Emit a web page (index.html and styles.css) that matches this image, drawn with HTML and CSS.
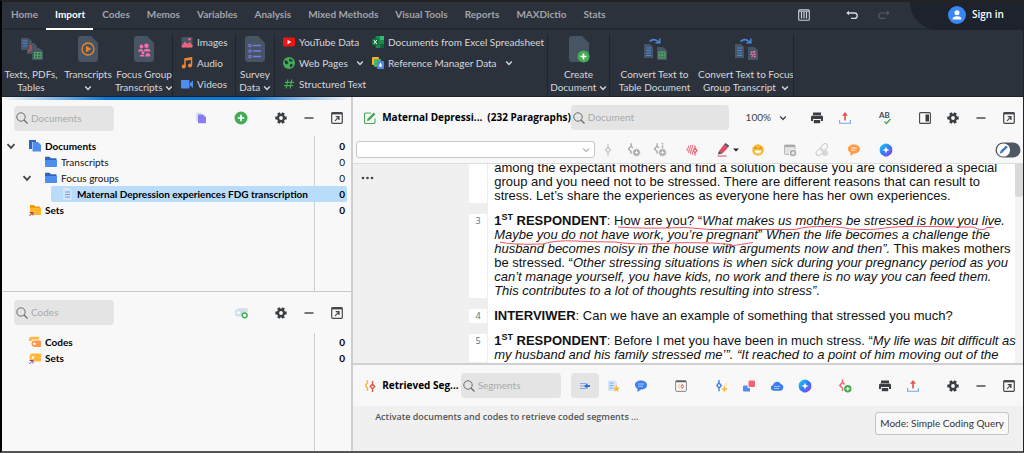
FILE: index.html
```html
<!DOCTYPE html>
<html lang="en">
<head>
<meta charset="utf-8">
<title>Maternal Depression experiences</title>
<link rel="stylesheet" href="styles.css">
</head>
<body>
<svg class="defs" aria-hidden="true">
  <defs>
    <linearGradient id="ai-fill" x1="0" y1="0" x2="1" y2="1"><stop offset="0" stop-color="#19d3f5"/><stop offset=".5" stop-color="#2f7df6"/><stop offset="1" stop-color="#a03df0"/></linearGradient>
    <symbol id="chev" viewBox="0 0 8 8"><path d="M1.200 2.500 4 5.500 6.800 2.500" fill="none" stroke="currentColor" stroke-width="1.400"/></symbol>
    <symbol id="search" viewBox="0 0 12 12"><circle cx="5" cy="5" r="4.200" fill="none" stroke="#6b6b6b" stroke-width="1"/><path d="M8 8 11.500 11.500" stroke="#6b6b6b" stroke-width="1.200"/></symbol>
    <symbol id="gear" viewBox="0 0 16 16"><g stroke="#3b3e42" stroke-width="3"><path d="M5.500 2.800 10.500 13.200M10.500 2.800 5.500 13.200M2.300 8H13.700"/></g><circle cx="8" cy="8" r="4.200" fill="#3b3e42"/><circle cx="8" cy="8" r="1.900" fill="#f8f8f8"/></symbol>
    <symbol id="minus" viewBox="0 0 16 16"><path d="M3.500 8H12.500" stroke="#4a4d50" stroke-width="1.500"/></symbol>
    <symbol id="popout" viewBox="0 0 16 16"><rect x="2.700" y="2.700" width="10.600" height="10.600" rx="1" fill="none" stroke="#45484b" stroke-width="1.200"/><path d="M2.500 3.500H13.500" stroke="#45484b" stroke-width="1.800"/><path d="M6 10.800 9.700 7.100M6.700 6.700H10V10" fill="none" stroke="#45484b" stroke-width="1.200"/></symbol>
    <symbol id="printer" viewBox="0 0 16 16"><rect x="4" y="2.500" width="8" height="2.500" fill="#3b3e42"/><path d="M3.500 5.600h9A1.500 1.500 0 0 1 14 7.100V11H12V9H4v2H2V7.100A1.500 1.500 0 0 1 3.500 5.600Z" fill="#3b3e42"/><rect x="4.800" y="10" width="6.400" height="3.200" fill="#3b3e42"/></symbol>
    <symbol id="upload" viewBox="0 0 16 16"><path d="M8 10.500V4" stroke="#e2574c" stroke-width="1.700"/><path d="M5 5.800 8 2l3 3.800Z" fill="#e2574c"/><path d="M2.600 10v3.200H13.400V10" fill="none" stroke="#76a6ea" stroke-width="1.100"/></symbol>
    <symbol id="ai" viewBox="0 0 16 16"><path d="M8 1.500C10 1.500 10.800 2.500 12.200 3.300 14 4.300 14.300 6 14.300 8S14 11.700 12.200 12.700 10 14.500 8 14.500 5.200 13.500 3.800 12.700 1.700 10 1.700 8 2 4.300 3.800 3.300 6 1.500 8 1.500Z" fill="url(#ai-fill)"/><path d="M8 4.500 9 7 11.500 8 9 9 8 11.500 7 9 4.500 8 7 7Z" fill="#fff"/></symbol>
    <symbol id="folder" viewBox="0 0 12 12"><path d="M0 1.500Q0 .8.8.8H4.500L6 2.300H11.500V5H0Z" fill="#2f66bd"/><path d="M0 4H12V10.300Q12 11 11.200 11H.8Q0 11 0 10.300Z" fill="#508df0"/></symbol>
    <symbol id="page" viewBox="0 0 20 26"><path d="M3 0H13L20 7V23Q20 26 17 26H3Q0 26 0 23V3Q0 0 3 0Z" fill="#475463"/></symbol>
    <symbol id="code" viewBox="0 0 16 16"><path d="M8 2V5M8 11v3M8 5 10.300 8 8 11 5.700 8Z" fill="none" stroke="currentColor" stroke-width="1.500"/></symbol>
    <symbol id="hook" viewBox="0 0 16 16"><path d="M7 1.500V4.500L4 8 7 11V13.500M7 4.500 9 7" fill="none" stroke="currentColor" stroke-width="1.600"/></symbol>
    <symbol id="plus" viewBox="0 0 16 16"><circle cx="8" cy="8" r="6.500" fill="#46ab55"/><path d="M8 4.800V11.200M4.800 8H11.200" stroke="#fff" stroke-width="1.700"/></symbol>
    <symbol id="people" viewBox="0 0 16 16"><g fill="#f06fae"><circle cx="5.500" cy="4.500" r="1.900"/><circle cx="10.500" cy="3.700" r="2.300"/><path d="M2 9.500Q2 7 5.500 7 7 7 7 9.500Z"/><path d="M7.500 9.500Q7.500 6.800 11 6.800 14.500 6.800 14.500 9.500Z"/><circle cx="7" cy="10.700" r="1.500"/><path d="M3.500 14.500Q3.500 12.600 7 12.600 8.500 12.600 8.500 14.500Z"/><path d="M9.300 14.500Q9.300 11 11.800 11 14.300 11 14.300 14.500Z"/></g></symbol>
  </defs>
</svg>
<div class="app">
  <header>
    <nav class="tabs">
      <a href="#">Home</a><a href="#" class="on">Import</a><a href="#">Codes</a><a href="#">Memos</a><a href="#">Variables</a><a href="#">Analysis</a><a href="#">Mixed Methods</a><a href="#">Visual Tools</a><a href="#">Reports</a><a href="#">MAXDictio</a><a href="#">Stats</a>
      <div class="quick">
        <button aria-label="Layout" class="ic"><svg viewBox="0 0 16 16"><rect x="2.700" y="2.700" width="10.600" height="10.600" rx="1" fill="none" stroke="#cdd0d4" stroke-width="1.100"/><path d="M5.500 5v6.500M8 5v6.500M10.500 5v6.500M3 4.200H13" stroke="#cdd0d4" stroke-width="1.200"/></svg></button>
        <button aria-label="Undo" class="ic undo"><svg viewBox="0 0 16 16"><path d="M3.500 6H10.500a2.700 2.700 0 0 1 0 5.400H7" fill="none" stroke="#d5d8dc" stroke-width="1.300"/><path d="M5 3.700 2.300 6 5 8.300Z" fill="#d5d8dc"/></svg></button>
        <button aria-label="Redo" class="ic"><svg viewBox="0 0 16 16"><path d="M12.500 6H5.500a2.700 2.700 0 0 0 0 5.400H9" fill="none" stroke="#535b66" stroke-width="1.200"/><path d="M11 3.700 13.700 6 11 8.300Z" fill="#535b66"/></svg></button>
      </div>
      <button class="signin"><svg viewBox="0 0 18 18"><circle cx="9" cy="9" r="9" fill="#3a86f5"/><circle cx="9" cy="6.800" r="2.500" fill="#fff"/><path d="M4.500 13.500Q4.500 10.200 9 10.200T13.500 13.500Z" fill="#fff"/></svg>Sign in</button>
    </nav>
    <div class="ribbon">
      <button class="big w1"><svg viewBox="0 0 24 26"><path d="M2 2h7l4 3v9H2Z" fill="#475463"/><path d="M3.500 5h5M3.500 7.500h6M3.500 10h6" stroke="#4b86dc"/><path d="M8 7h7l3 3v8H8Z" fill="#475463"/><path d="M9 16C12 13 12.500 9 11.500 9S12 14 16 14 11 13 9 16" fill="none" stroke="#d9534f"/><path d="M13 12h7l4 3v9H13Z" fill="#475463"/><rect x="15.500" y="16.500" width="6.500" height="5.500" fill="none" stroke="#4eb35d"/><path d="M15.500 19.200H22M18.700 16.500V22" stroke="#4eb35d"/></svg><span>Texts, PDFs,<br>Tables</span></button>
      <button class="big w2"><svg viewBox="0 0 24 26"><use href="#page" x="2" width="20" height="26"/><circle cx="12" cy="13" r="6" fill="none" stroke="#e8862e" stroke-width="1.300"/><path d="M10 9.800V16.200L15.300 13Z" fill="#e8862e"/></svg><span>Transcripts<br><svg class="cv"><use href="#chev"/></svg></span></button>
      <button class="big w2"><svg viewBox="0 0 24 26"><use href="#page" x="2" width="20" height="26"/><use href="#people" x="4" y="6" width="16" height="16"/></svg><span>Focus Group<br>Transcripts <svg class="cv"><use href="#chev"/></svg></span></button>
      <div class="stack sep w3">
        <button><svg viewBox="0 0 12 12"><rect x=".5" y="1" width="11" height="10.500" rx="1" fill="#475463"/><path d="M.5 10 4 5.500 6.500 8 8.500 6 11.500 9V10.500Q11.500 11.500 10.500 11.500H1.500Q.5 11.500.5 10.500Z" fill="#f0627a"/><circle cx="8.500" cy="3.300" r="1.300" fill="#f0627a"/></svg>Images</button>
        <button><svg viewBox="0 0 12 12"><path d="M4 9.500V1.800L10.500.8V8.300" fill="none" stroke="#f08432" stroke-width="1.500"/><path d="M4 2.800 10.500 1.800" stroke="#f08432" stroke-width="2"/><circle cx="2.700" cy="9.500" r="2" fill="#f08432"/><circle cx="9" cy="8.500" r="2" fill="#f08432"/></svg>Audio</button>
        <button><svg viewBox="0 0 12 12"><rect y="2" width="8.500" height="8.500" rx=".8" fill="#508df0"/><path d="M9 5 12 2.500V10L9 7.500Z" fill="#508df0"/></svg>Videos</button>
      </div>
      <button class="big sep w4"><svg viewBox="0 0 24 26"><use href="#page" x="2" width="20" height="26"/><g fill="none" stroke="#7d78e8" stroke-width="1.100"><path d="M10 9.500h8M10 15h8M10 20.500h8" stroke-width="1.400"/><circle cx="7" cy="9.500" r="1.300"/><circle cx="7" cy="15" r="1.300"/><circle cx="7" cy="20.500" r="1.300"/></g></svg><span>Survey<br>Data <svg class="cv"><use href="#chev"/></svg></span></button>
      <div class="stack sep w5">
        <button><svg viewBox="0 0 12 12"><rect y="1.500" width="12" height="9" rx="1.500" fill="#f11212"/><path d="M4.500 3.800V8.200L8.300 6Z" fill="#fff"/></svg>YouTube Data</button>
        <button><svg viewBox="0 0 12 12"><circle cx="6" cy="6" r="6" fill="#46ab55"/><path d="M1.500 3.500 4 3.800 5.500 6 3.500 7.500 2 6.500ZM6.500 1.500 10 3.500 8 5 6 3.500ZM7 7.500 9.500 6.800 9.500 9 7 10.500Z" fill="#27303a"/></svg>Web Pages <svg class="cv gap"><use href="#chev"/></svg></button>
        <button><svg viewBox="0 0 12 12"><path d="M4.800 1.500 3.300 10.500M8.700 1.500 7.200 10.500M1.800 4.300H11M1 7.700H10.200" stroke="#46ab55" stroke-width="1.200"/></svg>Structured Text</button>
      </div>
      <div class="stack w6">
        <button><svg viewBox="0 0 12 12"><rect x="3.500" width="8.500" height="12" rx="1" fill="#1b8a4b"/><path d="M8 0h4v4H8Z" fill="#32bd76"/><path d="M8 8h4v4H8Z" fill="#12613a"/><rect y="2.700" width="6.600" height="6.600" fill="#0f703f"/><path d="M1.800 4 4.800 8M4.800 4 1.800 8" stroke="#fff"/></svg>Documents from Excel Spreadsheet</button>
        <button><svg viewBox="0 0 12 12"><rect width="7" height="8" rx="1" fill="#f3b32c"/><rect x="2" y="2" width="7" height="8" rx="1" fill="#4eb35d"/><rect x="5" y="4" width="7" height="8" rx="1" fill="#4b86e8"/><path d="M8.500 5.800V9M7 8 8.500 10 10 8Z" stroke="#fff" fill="#fff"/></svg>Reference Manager Data <svg class="cv gap"><use href="#chev"/></svg></button>
      </div>
      <button class="big sep w7"><svg viewBox="0 0 24 26"><use href="#page" x="2" width="20" height="26"/><use href="#plus" x="9" y="13" width="15" height="15"/></svg><span>Create<br>Document <svg class="cv"><use href="#chev"/></svg></span></button>
      <button class="big sep w8"><svg viewBox="0 0 24 26"><path d="M1 8h6l3 3v11H1ZM14 11h6l4 3v10H14Z" fill="#475463"/><path d="M3 12h5M3 14.500h5M3 17h5M3 19.500h5" fill="none" stroke="#4b86dc"/><path d="M6.500 5.500Q11 1.500 16 6M16.800 2.500V6.800H12.500" fill="none" stroke="#4b86dc" stroke-width="1.500"/><path d="M16 16h6v6H16ZM16 19h6M19 16v6" fill="none" stroke="#4eb35d"/></svg><span>Convert Text to<br>Table Document</span></button>
      <button class="big w9"><svg viewBox="0 0 24 26"><path d="M1 8h6l3 3v11H1ZM14 11h6l4 3v10H14Z" fill="#475463"/><path d="M3 12h5M3 14.500h5M3 17h5M3 19.500h5" fill="none" stroke="#4b86dc"/><path d="M6.500 5.500Q11 1.500 16 6M16.800 2.500V6.800H12.500" fill="none" stroke="#4b86dc" stroke-width="1.500"/><use href="#people" x="15" y="14" width="8" height="8"/></svg><span>Convert Text to Focus<br>Group Transcript &nbsp;<svg class="cv"><use href="#chev"/></svg></span></button>
      <div class="sep"></div>
    </div>
  </header>
  <main>
    <aside>
      <section class="panel docs">
        <div class="bar">
          <label class="find"><svg><use href="#search"/></svg><input aria-label="Search documents" placeholder="Documents"></label>
          <div class="tools far">
            <div class="tools wide">
              <button class="ic" aria-label="Activated documents"><svg viewBox="0 0 16 16"><path d="M3 2.500h5l2 2V11H3Z" fill="#d3e2f2"/><path d="M5 4.500h5L13 7.300V12.500Q13 13.300 12 13.300H5.800Q5 13.300 5 12.500Z" fill="#8a7bf0"/></svg></button>
              <button class="ic" aria-label="Add"><svg><use href="#plus"/></svg></button>
              <button class="ic" aria-label="Settings"><svg><use href="#gear"/></svg></button>
            </div>
            <button class="ic" aria-label="Minimize"><svg><use href="#minus"/></svg></button>
            <button class="ic" aria-label="Undock"><svg><use href="#popout"/></svg></button>
          </div>
        </div>
        <ul class="tree">
          <li class="bold"><svg class="tw"><use href="#chev"/></svg><svg class="ti" viewBox="0 0 12 12"><path d="M0 0h7v2H3v7H0Z" fill="#2f66bd"/><path d="M3.500 2H9L12 5v6.500H3.500Z" fill="#508df0"/></svg><span>Documents</span><b>0</b></li>
          <li class="l1"><i class="tw"></i><svg class="ti"><use href="#folder"/></svg><span>Transcripts</span><b>0</b></li>
          <li class="l1"><svg class="tw"><use href="#chev"/></svg><svg class="ti"><use href="#folder"/></svg><span>Focus groups</span><b>0</b></li>
          <li class="l2 bold"><svg class="ti" viewBox="0 0 12 12"><path d="M2 0h5.500L10.500 3v9H2Z" fill="#d5e5f7"/><path d="M4 4h5M4 6.500h5M4 9h5" stroke="#6a9be8"/></svg><span>Maternal Depression experiences FDG transcription</span><b>0</b></li>
          <li class="bold"><i class="tw"></i><svg class="ti" viewBox="0 0 12 12"><path d="M1 1h4l1.500 1.500H11V5H1Z" fill="#f09a0e"/><path d="M1 4h11v7H1Z" fill="#ffb52e"/><path d="M.3 12 3.500 8.800M.8 8.500H4V11.500" fill="none" stroke="#93466f"/></svg><span>Sets</span><b>0</b></li>
        </ul>
      </section>
      <section class="panel codes">
        <div class="bar">
          <label class="find"><svg><use href="#search"/></svg><input aria-label="Search codes" placeholder="Codes"></label>
          <div class="tools far">
            <div class="tools wide">
              <button class="ic" aria-label="New code"><svg viewBox="0 0 16 16"><path d="M5 3h10v4H5Z" fill="#d9e6ee"/><rect x="2" y="4" width="11" height="7.500" rx="3" fill="#cfe0ea"/><circle cx="5.500" cy="7.700" r="1.500" fill="#fff"/><circle cx="11.700" cy="10.300" r="2.400" fill="#fff" stroke="#46ab55" stroke-width="1.500"/></svg></button>
              <button class="ic" aria-label="Settings"><svg><use href="#gear"/></svg></button>
            </div>
            <button class="ic" aria-label="Minimize"><svg><use href="#minus"/></svg></button>
            <button class="ic" aria-label="Undock"><svg><use href="#popout"/></svg></button>
          </div>
        </div>
        <ul class="tree">
          <li class="bold"><i class="tw"></i><svg class="ti" viewBox="0 0 12 12"><path d="M0 5V3.500Q0 .8 3 .8H10V3.500H4Q2.500 3.500 2.500 5Z" fill="#ffb83d"/><path d="M5.500 4.500H11Q12 4.500 12 5.500V10Q12 11 11 11H5.500Q2.500 11 2.500 7.700T5.500 4.500Z" fill="#ff984d"/><circle cx="5.500" cy="7.700" r="1.300" fill="#fff"/></svg><span>Codes</span><b>0</b></li>
          <li class="bold"><i class="tw"></i><svg class="ti" viewBox="0 0 12 12"><path d="M3.500 1.500H11Q12 1.500 12 2.500V8.500Q12 9.500 11 9.500H3.500Q.5 9.500.5 5.500T3.500 1.500Z" fill="#ffb83d"/><circle cx="4" cy="5.500" r="1.300" fill="#fff"/><path d="M.3 12 3.500 8.800M.8 8.500H4V11.500" fill="none" stroke="#7b4a95"/></svg><span>Sets</span><b>0</b></li>
        </ul>
      </section>
    </aside>
    <div class="work">
      <section class="viewer">
        <div class="bar">
          <svg class="lead" viewBox="0 0 14 14"><path d="M12 7.500V11.500Q12 12.500 11 12.500H2.500Q1.500 12.500 1.500 11.500V3Q1.500 2 2.500 2H8" fill="none" stroke="#46ab55" stroke-width="1.100"/><path d="M4.500 7.700 10.700 1.500 12.500 3.300 6.300 9.500 4 10Z" fill="#46ab55"/></svg>
          <h2>Maternal Depressi...</h2><h2 class="para">(232 Paragraphs)</h2>
          <label class="find grow"><svg><use href="#search"/></svg><input aria-label="Search document" placeholder="Document"></label>
          <button class="zoom">100% <svg class="cv"><use href="#chev"/></svg></button>
          <div class="tools wide">
            <div class="tools"><button class="ic" aria-label="Print"><svg><use href="#printer"/></svg></button><button class="ic" aria-label="Export"><svg><use href="#upload"/></svg></button></div>
            <button class="ic" aria-label="Spelling"><svg viewBox="0 0 16 16"><text x="2" y="8" class="ab">AB</text><path d="M7.500 11.500 9.500 13.500 13.500 9" fill="none" stroke="#46ab55" stroke-width="1.500"/></svg></button>
            <div class="tools"><button class="ic" aria-label="Sidebar"><svg viewBox="0 0 16 16"><rect x="2.600" y="2.600" width="10.800" height="10.800" rx="1" fill="none" stroke="#45484b" stroke-width="1.100"/><path d="M8.500 4.500H12V11.500H8.500Z" fill="#3b3e42"/></svg></button><button class="ic" aria-label="Settings"><svg><use href="#gear"/></svg></button><button class="ic" aria-label="Minimize"><svg><use href="#minus"/></svg></button><button class="ic" aria-label="Undock"><svg><use href="#popout"/></svg></button></div>
          </div>
        </div>
        <div class="codebar">
          <select aria-label="Code"><option></option></select>
          <div class="tools mid">
            <div class="tools tight">
              <button class="ic pale" aria-label="Code"><svg><use href="#code"/></svg></button>
              <button class="ic grey" aria-label="Code with new code"><svg viewBox="0 0 16 16"><use href="#hook" x="-1" y="0" width="14" height="14"/><circle cx="10.500" cy="10.500" r="4" fill="#aaa" stroke="#f8f8f8"/><path d="M10.500 8.700v3.600M8.700 10.500h3.600" stroke="#fff"/></svg></button>
              <button class="ic grey" aria-label="Code in vivo"><svg viewBox="0 0 16 16"><use href="#hook" x="-1" y="0" width="14" height="14"/><path d="M10.500 1v1.500M10.500 3.500V6" stroke="#aaa" stroke-width="1.500"/><circle cx="10.500" cy="10.500" r="4" fill="#aaa" stroke="#f8f8f8"/><path d="M10.500 8.700v3.600M8.700 10.500h3.600" stroke="#fff"/></svg></button>
            </div>
            <button class="ic red" aria-label="Emoticode"><svg viewBox="0 0 16 16"><g fill="none" stroke="#f07f90" stroke-width="1.100"><path d="M4.500 3.500V5.500L2.800 7.500 4.500 9.500V11"/><path d="M6.500 3V5.500L5 8 6.500 10V12"/><path d="M8.500 3V5.500L7 8 8.500 10.500V13"/></g><path d="M11 3.500V6M11 11v2.500M11 6 13 8.500 11 11 9.200 8.500Z" fill="none" stroke="#ee6478" stroke-width="1.300"/></svg></button>
            <div class="tools tight">
            <button class="pen" aria-label="Highlight"><svg viewBox="0 0 24 16"><path d="M3 9 8 2.500 12 5.500 6.500 11.500Z" fill="#e04865"/><path d="M8 2.500 9.500 1 13.300 3.800 12 5.500Z" fill="#4f5257"/><path d="M3 9 1.700 12.500 6.500 11.500Z" fill="#4f5257"/><path d="M1.500 14H10.500" stroke="#e04865"/><path d="M17 6.500H23L20 9.500Z" fill="#222"/></svg></button>
            <button class="ic" aria-label="Emoji"><svg viewBox="0 0 16 16"><circle cx="8" cy="8" r="5.800" fill="#f9b934"/><path d="M4.500 6.500Q5.500 5 6.500 6.500M9.500 6.500Q10.500 5 11.500 6.500" fill="none" stroke="#8a641c"/><path d="M4.800 8.500H11.200Q11.200 11.500 8 11.500T4.800 8.500Z" fill="#fff"/></svg></button>
            </div>
            <button class="ic grey" aria-label="Form"><svg viewBox="0 0 16 16"><rect x="2.500" y="3" width="10.500" height="9.500" rx="1" fill="#e1e1e1" stroke="#b8b8b8"/><path d="M2.500 4H13" stroke="#aaa" stroke-width="2"/><circle cx="11" cy="11" r="3.800" fill="#aaa" stroke="#f8f8f8"/><path d="M11 9.300v3.400M9.300 11h3.400" stroke="#fff"/></svg></button>
            <button class="ic" aria-label="Link"><svg viewBox="0 0 16 16"><g fill="none" stroke="#c9cdd1"><rect x="1.500" y="8" width="8" height="5" rx="2.500" transform="rotate(-40 5 10)"/><rect x="6.500" y="3" width="8" height="5" rx="2.500" transform="rotate(-45 10 6)"/></g><circle cx="11" cy="11" r="3" fill="#d3d6d9"/></svg></button>
            <button class="ic" aria-label="Comment"><svg viewBox="0 0 16 16"><path d="M7.500 2.500C11 2.500 14 4 14 7S11 11.500 8 11.500L4.500 14V11Q2 9.500 2 7C2 4 4.500 2.500 7.500 2.500Z" fill="#ff9a48"/><path d="M5 6h6M5 8.300h4.500" stroke="#fff" stroke-width=".8"/></svg></button>
            <button class="ic" aria-label="AI assist"><svg><use href="#ai"/></svg></button>
          </div>
          <label class="switch"><input type="checkbox" aria-label="Edit mode"><svg viewBox="0 0 26 16"><rect x=".5" y=".5" width="25" height="15" rx="7.500" fill="#4d5864"/><circle cx="8.500" cy="8" r="6.600" fill="#fff"/><path d="M4.500 12 5.700 8.800 11 3.500 12.800 5.200 7.500 10.500Z" fill="#4b78b8"/></svg></label>
        </div>
        <div class="page">
          <div class="margin"><button aria-label="More"><svg viewBox="0 0 14 10"><circle cx="2" cy="5" r="1.300"/><circle cx="6.500" cy="5" r="1.300"/><circle cx="11" cy="5" r="1.300"/></svg></button></div>
          <div class="text">
            <div class="row"><span class="num"></span><p>among the expectant mothers and find a solution because you are considered a special<br>group and you need not to be stressed. There are different reasons that can result to<br>stress. Let’s share the experiences as everyone here has her own experiences.</p></div>
            <div class="row"><span class="num">3</span><p><strong>1<sup>ST</sup> RESPONDENT</strong>: How are you? “<em>What makes us mothers be stressed is how you live.<br>Maybe you do not have work, you’re pregnant</em>” <em>When the life becomes a challenge the<br>husband becomes noisy in the house with arguments now and then”.</em> This makes mothers<br>be stressed. “<em>Other stressing situations is when sick during your pregnancy period as you<br>can’t manage yourself, you have kids, no work and there is no way you can feed them.<br>This contributes to a lot of thoughts resulting into stress”.</em></p>
              <svg class="ink" viewBox="0 0 520 40"><path d="M123 13Q150 15 190 13.500L215 15.500H300Q312 12 330 12.500T355 15Q375 16.500 390 14T465 13L478 13Q488 18 492 13.500H499M5 28Q15 31 48 30 60 26 80 27T120 28Q140 31 165 29.500T215 29 235 31.500 258 28.500"/></svg></div>
            <div class="row"><span class="num">4</span><p><strong>INTERVIWER</strong>: Can we have an example of something that stressed you much?</p></div>
            <div class="row"><span class="num">5</span><p><strong>1<sup>ST</sup> RESPONDENT</strong>: Before I met you have been in much stress. “<em>My life was bit difficult as<br>my husband and his family stressed me’”. “It reached to a point of him moving out of the</em></p></div>
          </div>
          <div class="scroll"><i></i></div>
        </div>
      </section>
      <section class="retrieved">
        <div class="bar">
          <svg class="lead" viewBox="0 0 14 14"><path d="M4.500 1V3.500M4.500 3.500 2.500 6.500 4.500 9.500V12" fill="none" stroke="#f9b934" stroke-width="1.400"/><path d="M9.500 2V5M9.500 10v3M9.500 5 11.700 7.500 9.500 10 7.300 7.500Z" fill="none" stroke="#e2574c" stroke-width="1.400"/></svg>
          <h2 class="seg">Retrieved Seg...</h2>
          <label class="find"><svg><use href="#search"/></svg><input aria-label="Search segments" placeholder="Segments"></label>
          <div class="tools wide far">
            <div class="tools">
              <div class="tools near"><button class="pressed" aria-label="Segment list"><svg viewBox="0 0 16 16"><path d="M3 5.500h6M3 8h9M3 10.500h6" stroke="#75a6f2" stroke-width="1.200"/><path d="M7 8 10.500 5V7H13V9H10.500V11Z" fill="#326fd1"/></svg></button>
              <button class="ic" aria-label="Weight"><svg viewBox="0 0 16 16"><path d="M3 2.500h7l2 2V13H3Z" fill="#d6e5f7"/><path d="M4.500 5h4M4.500 7.500h4M4.500 10h3" stroke="#7da9f0"/><path d="M11.500 7 12.500 9.500 15 9.800 13 11.500 13.600 14 11.500 12.600 9.300 14 10 11.500 8 9.800 10.500 9.500Z" fill="#f9b934"/></svg></button></div>
              <button class="ic" aria-label="Comments"><svg viewBox="0 0 16 16"><path d="M8 2.500C11 2.500 14 4 14 7S11 11.500 8 11.500L4.500 14V11Q2 9.500 2 7C2 4 4.500 2.500 8 2.500Z" fill="#407ff0"/><path d="M5 6h6M5 8.300h5" stroke="#cfe0ff" stroke-width=".8"/></svg></button>
            </div>
            <button class="ic" aria-label="Code view"><svg viewBox="0 0 16 16"><rect x="2.600" y="2.600" width="10.800" height="10.800" rx="1" fill="none" stroke="#85888b"/><path d="M3 3.500H13" stroke="#5c5f62" stroke-width="1.500"/><path d="M6.800 6.300 5.300 8.300 6.800 10.300" fill="none" stroke="#f9b934"/><path d="M9.300 6.300 10.700 8.300 9.300 10.300 8 8.300Z" fill="none" stroke="#e2574c"/></svg></button>
            <div class="tools">
              <button class="ic blue" aria-label="Code suggestions"><svg viewBox="0 0 16 16"><use href="#code" x="-2" width="16" height="15"/><path d="M11.500 7.500 12.300 10 14.500 11 12.300 12 11.500 14.200 10.700 12 8.700 11 10.700 10ZM13.500 5v3" fill="#f9b934" stroke="#f9b934" stroke-width=".4"/></svg></button>
              <button class="ic" aria-label="Subcodes"><svg viewBox="0 0 16 16"><rect x="7.500" y="2.500" width="6.500" height="6.500" rx="1" fill="#f4647c"/><path d="M3 7.500H6.500V10H9V13Q9 13.500 8.500 13.500H3Q2 13.500 2 12.500V8.500Q2 7.500 3 7.500Z" fill="#508df0"/></svg></button>
              <button class="ic" aria-label="Word cloud"><svg viewBox="0 0 16 16"><path d="M4.500 12.800A3 3 0 0 1 4 6.900 4.200 4.200 0 0 1 11.800 6 3.500 3.500 0 0 1 11.500 12.800Z" fill="#407ff0"/><path d="M5 8.500h6M5 10.500h5" stroke="#bcd5ff" stroke-width=".8"/></svg></button>
              <button class="ic" aria-label="AI assist"><svg><use href="#ai"/></svg></button>
            </div>
            <button class="ic red" aria-label="Autocode"><svg viewBox="0 0 16 16"><use href="#hook" x="-1" y="0" width="15" height="15"/><circle cx="10.800" cy="10.800" r="3.700" fill="#46ab55"/><path d="M10.800 8.800v4M8.800 10.800h4" stroke="#fff"/></svg></button>
            <div class="tools"><button class="ic" aria-label="Print"><svg><use href="#printer"/></svg></button><button class="ic" aria-label="Export"><svg><use href="#upload"/></svg></button></div>
            <div class="tools"><button class="ic" aria-label="Settings"><svg><use href="#gear"/></svg></button><button class="ic" aria-label="Minimize"><svg><use href="#minus"/></svg></button><button class="ic" aria-label="Undock"><svg><use href="#popout"/></svg></button></div>
          </div>
        </div>
        <div class="result"><p>Activate documents and codes to retrieve coded segments ...</p><button class="mode">Mode: Simple Coding Query</button></div>
      </section>
    </div>
  </main>
</div>
</body>
</html>
```
FILE: styles.css
```css
* { box-sizing: border-box; }
body { margin: 0; font: 10px/13px Lato, "Open Sans", sans-serif; color: #111; }
button { font: inherit; color: inherit; background: none; border: 0; padding: 0; }
button, svg, input, h2, p, ul { margin: 0; }
svg { display: block; flex: none; }
.defs { position: absolute; width: 0; height: 0; }
.app { height: 100vh; display: flex; flex-direction: column; overflow: hidden; background: #f8f8f8; border: solid #222; border-width: 2px 1px 2px 2px; border-left-color: #000; border-bottom-color: #555; }

/* Header */
header { background: #2c323c; color: #d5d8dc; border-bottom: 1px solid #1d222a; }
.tabs { display: flex; height: 28px; border-bottom: 2px solid #222a32; }
.tabs a { color: #a0a4aa; font-weight: 700; text-decoration: none; line-height: 24px; padding: 0 8px 0 9px; white-space: nowrap; height: 28px; }
.tabs a.on { color: #fff; border-bottom: 2px solid #fff; }
.quick { display: flex; align-items: center; gap: 16px; margin-left: auto; padding-right: 18px; }
.undo { margin-left: 16px; }
.signin { display: flex; align-items: center; gap: 6px; height: 28px; width: 113px; padding: 0 0 3px 38px; background: #1d222c; border-radius: 0 0 0 28px; color: #fff; font-family: "Open Sans", sans-serif; font-weight: 600; white-space: nowrap; }
.signin svg { width: 18px; height: 18px; }
.ribbon { display: flex; height: 66px; padding-top: 4px; }
.big { display: flex; flex-direction: column; align-items: center; gap: 6px; white-space: nowrap; padding-top: 2px; }
.big > svg { width: 24px; height: 26px; overflow: visible; }
.cv { display: inline-block; width: 8px; height: 8px; vertical-align: -1px; }
.cv.gap { margin-left: 4px; }
.stack { display: flex; flex-direction: column; gap: 5px; padding-left: 8px; }
.stack button { display: flex; align-items: center; gap: 4px; height: 16px; white-space: nowrap; }
.stack button > svg:first-child { width: 12px; height: 12px; }
.sep { border-left: 1px solid #1f252d; }
.w1 { width: 58px; }
.w2 { width: 56px; }
.w3 { width: 63px; }
.w4 { width: 39px; }
.w5 { width: 90px; }
.w6 { width: 183px; }
.w7 { width: 62px; }
.w8 { width: 90px; }
.w9 { width: 94px; }

/* Shared toolbars */
main { flex: 1; min-height: 0; display: flex; }
.bar { display: flex; align-items: center; flex: none; height: 41px; padding: 0 6px 0 12px; }
.find { display: flex; align-items: center; gap: 3px; width: 100px; height: 25px; padding: 0 2px; background: #e4e4e4; border-radius: 4px; }
.find.grow { flex: 1; width: auto; }
.find svg { width: 12px; height: 12px; }
.find input { flex: 1; min-width: 0; border: 0; padding: 0; background: none; font: inherit; }
.find input::placeholder { color: #aaa; opacity: 1; }
.tools { display: flex; align-items: center; gap: 12px; }
.tools.wide { gap: 24px; }
.tools.mid { gap: 16px; }
.tools.tight { gap: 10px; }
.tools.near { gap: 6px; }
.far { margin-left: auto; }
.ic, .ic svg { width: 16px; height: 16px; }
.grey { color: #aaa; }
.pale { color: #ccc; }
.red { color: #ee6478; }
.blue { color: #407ff0; }

/* Document and code trees */
aside { width: 34.2%; display: flex; flex-direction: column; }
.panel { display: flex; flex-direction: column; }
.docs { flex: 194; border-bottom: 1px solid #c8c8c8; }
.docs::before { content: ""; flex: none; height: 3px; background: linear-gradient(90deg, #f8f8f8, #0f78d8 30%, #0f78d8 70%, #f8f8f8); }
.docs .bar { height: 36px; }
.codes { flex: 159; }
.tree { flex: 1; list-style: none; padding: 2px 4px 0 4px; background: linear-gradient(#d0d0d0, #d0d0d0) right 36px top / 1px 100% no-repeat; }
.codes .tree { padding-top: 1px; }
.tree li { display: flex; align-items: center; height: 16px; white-space: nowrap; }
.tree span { margin-left: 4px; }
.tree b { margin-left: auto; padding-right: 2px; font-weight: inherit; }
.tree .bold { font-weight: 700; color: #000; }
.tw { width: 10px; height: 10px; margin-right: 13px; color: #444; }
.ti { width: 12px; height: 12px; }
.tree .l1 { padding-left: 16px; }
.tree .l2 { margin-left: 45px; padding-left: 10px; background: #b8dcfa; border-radius: 2px; }

/* Document browser */
.work { flex: 1; min-width: 0; display: flex; flex-direction: column; border-left: 2px solid #cdd0d3; }
.viewer { flex: 1; min-height: 0; display: flex; flex-direction: column; }
.work .bar { padding-left: 10px; }
.lead { width: 14px; height: 14px; margin-right: 5px; }
h2 { font: 700 10px/13px "Open Sans", sans-serif; color: #000; white-space: nowrap; }
.para { margin: 0 0 0 5px; }
.seg { margin-right: 2px; }
.zoom { display: flex; align-items: center; gap: 8px; padding: 0 22px 0 17px; color: #444; }
.ab { font: 700 8px Lato, sans-serif; fill: #45484b; }
.codebar { display: flex; align-items: center; height: 26px; padding: 0 2px 2px 3px; border-bottom: 1px solid #dcdcdc; }
.codebar select { width: 239px; height: 17px; margin-right: 5px; border: 1px solid #c8c8c8; border-radius: 3px; appearance: none; background: #fff url("data:image/svg+xml,%3Csvg xmlns='http://www.w3.org/2000/svg' viewBox='0 0 8 8'%3E%3Cpath d='M1 2.500 4 5.500 7 2.500' fill='none' stroke='%23777'/%3E%3C/svg%3E") right 4px center / 8px 8px no-repeat; }
.pen, .pen svg { width: 24px; height: 16px; }
.switch { margin-left: auto; }
.switch input { position: absolute; opacity: 0; }
.switch svg { width: 26px; height: 16px; }
.page { flex: 1; min-height: 0; display: flex; overflow: hidden; background: #fff; }
.margin { width: 116px; padding: 9px 8px; background: #f0f0f0; }
.margin svg { width: 14px; height: 10px; fill: #444; }
.text { flex: 1; min-width: 0; margin-top: -3px; font: 13px/14px "Liberation Sans", Arial, sans-serif; }
.row { position: relative; display: flex; white-space: nowrap; padding-bottom: 11px; background: linear-gradient(#eee, #eee) left bottom / 19px 11px no-repeat; }
.num { width: 19px; flex: none; text-align: center; font: 9px/14px "Open Sans", sans-serif; color: #4d7486; border-right: 1px solid #eee; }
.row p { padding-left: 6px; }
sup { font-size: 9px; line-height: 0; vertical-align: 5px; }
.ink { position: absolute; left: 26px; top: 0; width: 520px; height: 40px; fill: none; stroke: #ee5560; stroke-width: 1; }
.scroll { width: 8px; background: #f3f3f3; }
.scroll i { display: block; height: 33px; background: #d9d9d9; border-radius: 0 0 3px 3px; }

/* Retrieved segments */
.retrieved { height: 88px; display: flex; flex-direction: column; border-top: 2px solid #d0d0d0; }
.pressed { width: 28px; height: 25px; background: #e4e4e4; border-radius: 4px; display: grid; place-items: center; }
.pressed svg { width: 16px; height: 16px; }
.result { flex: 1; display: flex; justify-content: space-between; align-items: flex-start; padding: 4px 18px 0 22px; background: #f0f0f0; color: #555; }
.result p { font-family: "Open Sans", sans-serif; font-size: 9px; font-weight: 600; }
.mode { height: 23px; margin-top: 2px; padding: 0 4px; border: 1px solid #c4c4c4; border-radius: 3px; background: #f8f8f8; color: #333; }
.mode { margin-right: -4px; }
```
